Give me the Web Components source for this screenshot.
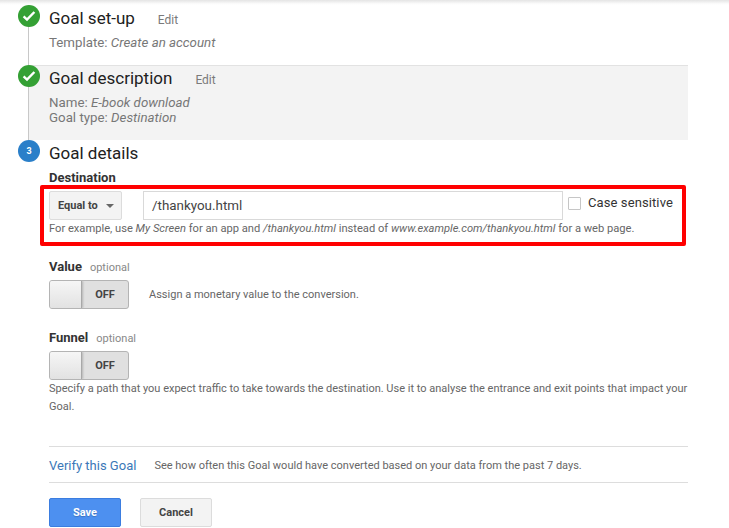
<!DOCTYPE html>
<html><head><meta charset="utf-8"><title>Goal details</title>
<style>
html,body{margin:0;padding:0;background:#fff;}
body{width:729px;height:528px;overflow:hidden;font-family:Roboto,"Liberation Sans",sans-serif;color:#333;}
.top{height:5px;background:linear-gradient(#e4e4e4,#fafafa 70%,#fff);}
.wrap{width:660px;margin-left:28px;}
i{font-style:italic}
</style></head><body>
<div class="top"></div>
<div class="wrap">
<goal-step state="done" title="Goal set-up" edit style="height:60px">
  <step-summary><span>Template: <i>Create an account</i></span></step-summary>
</goal-step>
<goal-step state="done" title="Goal description" edit shaded style="height:75px">
  <step-summary><span>Name: <i>E-book download</i></span><span>Goal type: <i>Destination</i></span></step-summary>
</goal-step>
<goal-step state="3" title="Goal details" noline>
  <field-label style="margin-top:3px">Destination</field-label>
  <dest-box></dest-box>
  <field-label optional="optional" style="margin-top:13px">Value</field-label>
  <goal-toggle style="margin-top:6px" hint="Assign a monetary value to the conversion."></goal-toggle>
  <field-label optional="optional" style="margin-top:21px">Funnel</field-label>
  <goal-toggle style="margin-top:6px"></goal-toggle>
  <help-text>Specify a path that you expect traffic to take towards the destination. Use it to analyse the entrance and exit points that impact your Goal.</help-text>
  <verify-row></verify-row>
  <form-actions></form-actions>
</goal-step>
</div>
<script>
function def(name, html){
  customElements.define(name, class extends HTMLElement{
    connectedCallback(){
      if(this.shadowRoot) return;
      const r=this.attachShadow({mode:'open'});
      r.innerHTML=typeof html==='function'?html(this):html;
    }
  });
}
const check='<svg width="14" height="12" viewBox="0 0 14 12"><path d="M1.6 6.4 5 9.6 12.4 2" fill="none" stroke="#fff" stroke-width="2.4"/></svg>';
def('goal-step', h=>{
  const done=h.getAttribute('state')==='done', sh=h.hasAttribute('shaded');
  return `<style>
  :host{display:block;box-sizing:border-box;position:relative;border-left:1px solid ${h.hasAttribute('noline')?'transparent':'#c8c8c8'};padding-left:20px;${sh?'background:#f3f3f3;border-top:1px solid #e2e2e2;':''}}
  .dot{position:absolute;left:-11px;top:${sh?'-1px':'0'};width:22px;height:22px;border-radius:50%;background:${done?'#34a034':'#2a7fc9'};color:#fff;display:flex;align-items:center;justify-content:center;font:700 9px Roboto,sans-serif;}
  .head{display:flex;align-items:baseline;height:${sh?'26px':'27px'};}
  h2{margin:${sh?'-1px':'0'} 0 0;font:400 17px/26px Roboto,sans-serif;color:#212121;}
  a{font:400 12px Roboto,sans-serif;color:#7a7a7a;margin-left:23px;}
  </style>
  <div class="dot">${done?check:h.getAttribute('state')}</div>
  <div class="head"><h2>${h.getAttribute('title')}</h2>${h.hasAttribute('edit')?'<a>Edit</a>':''}</div>
  <slot></slot>`;
});
def('step-summary',`<style>:host{display:flex;flex-direction:column;font:400 13.3px/15px Roboto,sans-serif;color:#777;padding-top:3px;}</style><slot></slot>`);
def('field-label',h=>`<style>:host{display:block;font:700 13px/15px Roboto,sans-serif;color:#333;}
  span{font:400 11px Roboto,sans-serif;color:#888;margin-left:8px;}</style><slot></slot>${h.getAttribute('optional')?'<span>optional</span>':''}`);
def('help-text',`<style>:host{display:block;font:400 11px/18px Roboto,sans-serif;color:#666;}</style><slot></slot>`);
def('dest-box',`<style>
  :host{display:block;box-sizing:border-box;width:646px;height:61px;margin-left:-9px;border:4px solid #f00;border-radius:2px;padding:2px 5px 0;}
  .row{display:flex;align-items:flex-start;}
  .sel{box-sizing:border-box;width:73px;height:29px;border:1px solid #dcdcdc;border-radius:2px;background:#f3f3f3;display:flex;align-items:center;padding-left:8px;font:700 11px Roboto,sans-serif;color:#444;}
  .sel b{margin-left:8px;border:4px solid transparent;border-top-color:#666;border-bottom:0;}
  .inp{box-sizing:border-box;width:420px;height:29px;border:1px solid #d9d9d9;margin-left:21px;padding-left:8px;display:flex;align-items:center;font:400 13.4px Roboto,sans-serif;color:#444;}
  .cb{box-sizing:border-box;width:13px;height:13px;border:1px solid #c6c6c6;border-radius:1px;margin:6px 0 0 5px;}
  .lab{font:400 13px/16px Roboto,sans-serif;color:#333;margin:4px 0 0 7px;letter-spacing:.1px;white-space:nowrap;}
  .hint{font:400 11.15px/14px Roboto,sans-serif;color:#666;margin-top:2px;white-space:nowrap;}
  </style>
  <div class="row"><div class="sel">Equal to<b></b></div><div class="inp">/thankyou.html</div><div class="cb"></div><div class="lab">Case sensitive</div></div>
  <div class="hint">For example, use <i>My Screen</i> for an app and <i>/thankyou.html</i> instead of <i>www.example.com/thankyou.html</i> for a web page.</div>`);
def('goal-toggle',h=>`<style>
  :host{display:flex;align-items:center;}
  .t{box-sizing:border-box;width:80px;height:29px;border:1px solid #b4b4b4;border-radius:3px;background:#e0e0e0;display:flex;overflow:hidden;}
  .k{box-sizing:border-box;width:32px;background:linear-gradient(#f6f6f6,#e2e2e2);border-right:1px solid #a8a8a8;box-shadow:1px 0 2px rgba(0,0,0,.2);}
  .o{flex:1;display:flex;align-items:center;justify-content:center;font:700 11px Roboto,sans-serif;color:#444;}
  .h{font:400 11px Roboto,sans-serif;color:#666;margin-left:20px;}
  </style><div class="t"><div class="k"></div><div class="o">OFF</div></div>${h.getAttribute('hint')?`<div class="h">${h.getAttribute('hint')}</div>`:''}`);
def('verify-row',`<style>
  :host{display:flex;align-items:center;box-sizing:border-box;width:639px;height:37px;margin-top:30px;padding-top:1px;border-top:1px solid #ddd;border-bottom:1px solid #ddd;}
  a{font:400 13px Roboto,sans-serif;color:#3b78b8;}
  span{font:400 11px Roboto,sans-serif;color:#666;margin-left:18px;}
  </style><a>Verify this Goal</a><span>See how often this Goal would have converted based on your data from the past 7 days.</span>`);
def('form-actions',`<style>
  :host{display:flex;gap:19px;margin-top:15px;}
  div{box-sizing:border-box;width:72px;height:29px;border-radius:2px;display:flex;align-items:center;justify-content:center;font:700 11px Roboto,sans-serif;}
  .s{background:#4d90f0;border:1px solid #3b7de0;color:#fff;text-shadow:0 1px 1px rgba(0,0,0,.2);}
  .c{background:#f3f3f3;border:1px solid #dcdcdc;color:#444;}
  </style><div class="s">Save</div><div class="c">Cancel</div>`);
</script>
</body></html>
